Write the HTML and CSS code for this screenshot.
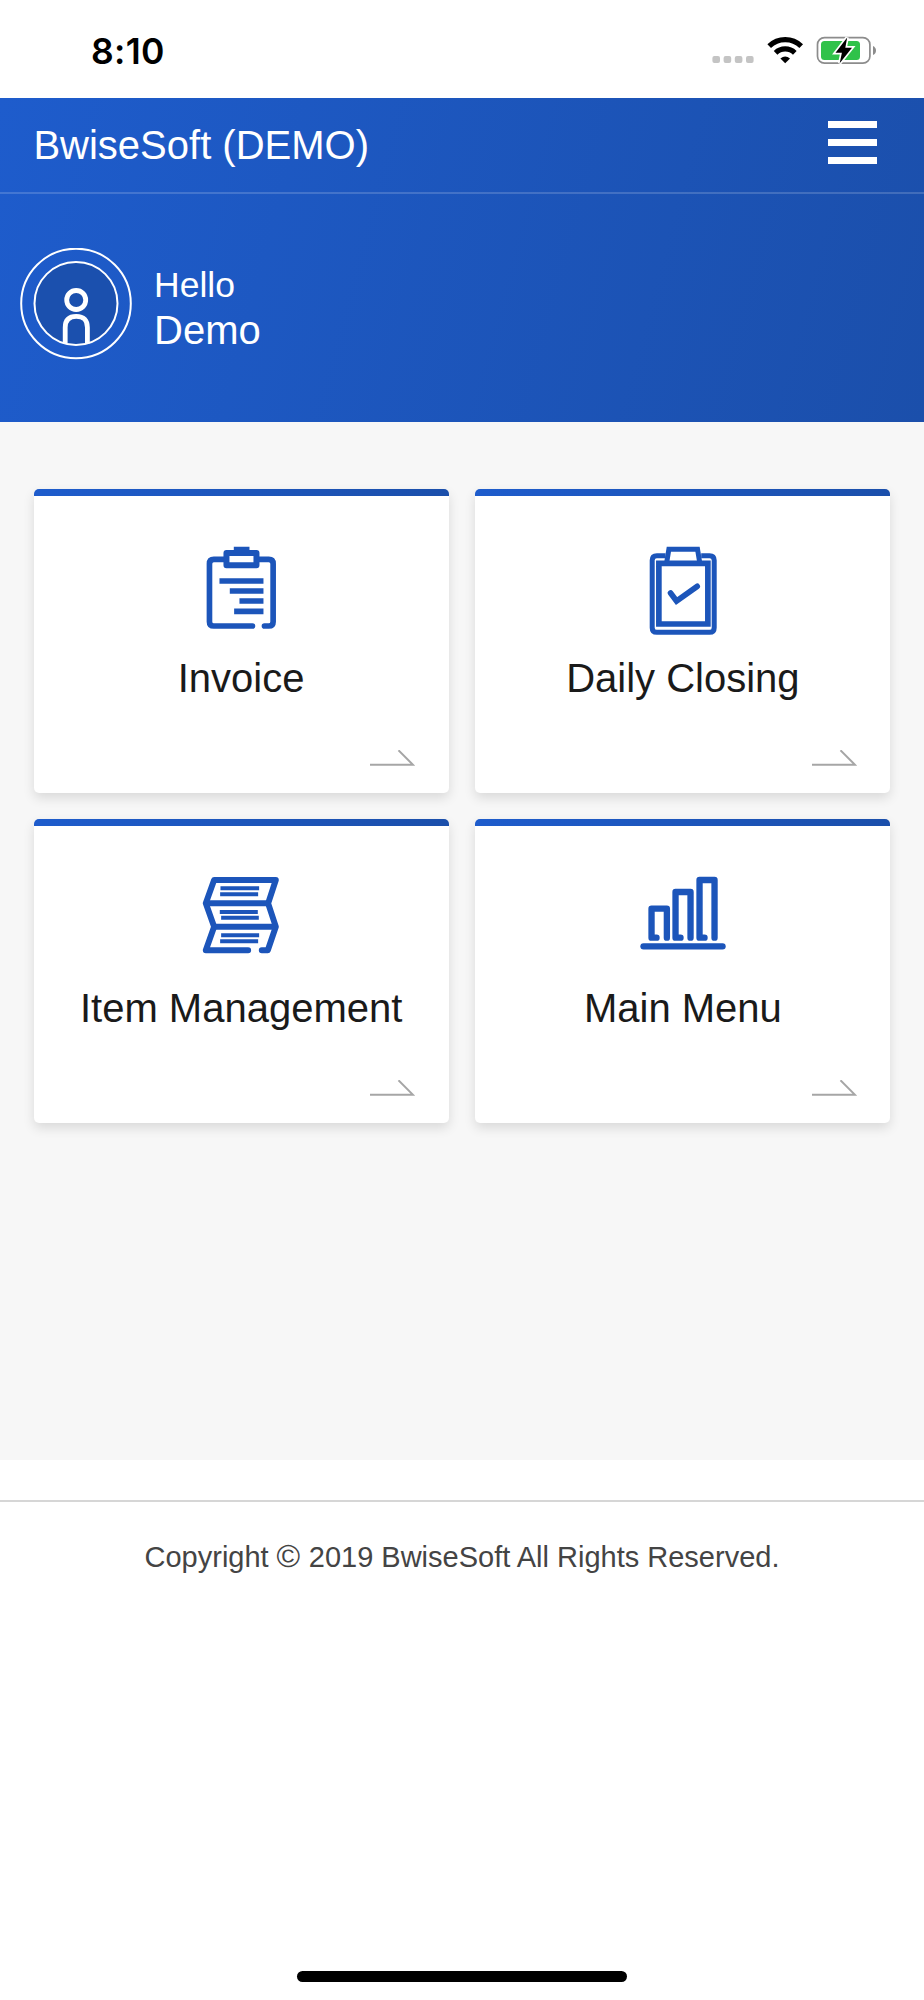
FILE: index.html
```html
<!DOCTYPE html>
<html lang="en">
<head>
    <meta charset="UTF-8">
    <meta name="viewport" content="width=device-width, initial-scale=1.0">
    <title>BwiseSoft (DEMO)</title>
    <link rel="stylesheet" href="styles.css">
</head>
<body>
    <!-- Status bar -->
    <div class="status-bar">
        <span class="time">8:10</span>
        <svg class="status-icons" viewBox="0 0 170 34" width="170" height="34">
            <g fill="#c4c4c4">
                <rect x="2.4" y="23" width="7.6" height="7" rx="2"/>
                <rect x="13.6" y="23" width="7.6" height="7" rx="2"/>
                <rect x="24.8" y="23" width="7.6" height="7" rx="2"/>
                <rect x="36" y="23" width="7.6" height="7" rx="2"/>
            </g>
            <g fill="none" stroke="#000" stroke-width="5.2">
                <path d="M59.2 13.2a23 23 0 0 1 32 0"/>
                <path d="M65.6 19.8a13.8 13.8 0 0 1 19.2 0"/>
            </g>
            <path d="M75.2 30.2l-4.8-4.8q4.8-3.8 9.6 0z" fill="#000"/>
            <rect x="107.5" y="4.6" width="52.4" height="25.6" rx="7" fill="none" stroke="#8c8c8c" stroke-width="1.7"/>
            <path d="M163 13q3 1.500 3 4.500t-3 4.500z" fill="#8c8c8c"/>
            <rect x="111" y="8" width="39" height="19" rx="3.500" fill="#30c24a"/>
            <path d="M137.200 4.500l-11.700 15.300h6.400l-2.200 10.500 12.300-15.500h-6.700z" fill="#000" stroke="#fff" stroke-width="3.400" paint-order="stroke"/>
        </svg>
    </div>

    <!-- Header -->
    <div class="header">
        <div class="navbar">
            <span class="brand">BwiseSoft (DEMO)</span>
            <div class="menu-btn">
                <span></span>
                <span></span>
                <span></span>
            </div>
        </div>
        <div class="profile">
            <svg class="avatar" viewBox="0 0 112 112" width="112" height="112" fill="none" stroke="#fff">
                <circle cx="56" cy="55.500" r="54.800" stroke-width="2"/>
                <circle cx="56" cy="55.500" r="41.500" fill="#1b50ae" stroke-width="2"/>
                <circle cx="56.200" cy="52" r="9.500" stroke-width="4.800"/>
                <path d="M45.200 95.500V79.500q0-11.200 11.100-11.200t11.100 11.200v16" stroke-width="4.800"/>
            </svg>
            <div class="greeting">
                <div class="hello">Hello</div>
                <div class="user">Demo</div>
            </div>
        </div>
    </div>

    <!-- Menu cards -->
    <div class="content">
        <div class="card">
            <svg class="card-icon" viewBox="3.6 0 300 330" fill="none" stroke="#1c55ba" stroke-width="17">
                <path d="M104 73H72q-13 0-13 13v174q0 13 13 13h116M206 73h31q13 0 13 13v174q0 13-13 13h-13" stroke-linecap="round"/>
                <rect x="110" y="54" width="90" height="37" stroke-width="18" stroke-linejoin="round"/>
                <path d="M132 44h47M89 138h132M120 168h101M149 198h72M133 229h88"/>
            </svg>
            <div class="card-title">Invoice</div>
            <svg class="arrow" viewBox="0 0 45 16"><path d="M0 14.800h43L28.500.3" fill="none" stroke="#a6a6a6" stroke-width="2"/></svg>
        </div>
        <div class="card">
            <svg class="card-icon" viewBox="8.4 0 300 330" fill="none" stroke="#1c55ba" stroke-width="15">
                <path d="M106 62H80q-14 0-14 14v202q0 14 14 14h158q14 0 14-14V76q0-14-14-14h-25"/>
                <path d="M86 85h147v182H86z" stroke-width="17"/>
                <path d="M110 79l6-36h86l6 36" stroke-width="15"/>
                <path d="M121 174l18 24 62-44" stroke-width="17" stroke-linecap="round"/>
            </svg>
            <div class="card-title">Daily Closing</div>
            <svg class="arrow" viewBox="0 0 45 16"><path d="M0 14.800h43L28.500.3" fill="none" stroke="#a6a6a6" stroke-width="2"/></svg>
        </div>
        <div class="card">
            <svg class="card-icon" viewBox="3.6 0 300 330" fill="none" stroke="#1c55ba" stroke-width="18" stroke-linejoin="round">
                <path d="M175 256H48l25-71-25-70 25-70h185l-23 70 23 70-24 71h-18" stroke-linecap="round"/>
                <path d="M48 115h187M73 185h185"/>
                <path d="M92 70h116M91 88h114M90 141h114M94 158h113M94 211h114M91 229h114" stroke-width="12"/>
            </svg>
            <div class="card-title">Item Management</div>
            <svg class="arrow" viewBox="0 0 45 16"><path d="M0 14.800h43L28.500.3" fill="none" stroke="#a6a6a6" stroke-width="2"/></svg>
        </div>
        <div class="card">
            <svg class="card-icon" viewBox="8.4 0 300 330" fill="none" stroke="#1c55ba" stroke-width="19" stroke-linecap="round" stroke-linejoin="round">
                <path d="M40 244h237"/>
                <path d="M79 218H64v-87h46v87M151 218h-15V81h45v137M223 218h-15V45h45v173"/>
            </svg>
            <div class="card-title">Main Menu</div>
            <svg class="arrow" viewBox="0 0 45 16"><path d="M0 14.800h43L28.500.3" fill="none" stroke="#a6a6a6" stroke-width="2"/></svg>
        </div>
    </div>

    <!-- Footer -->
    <div class="footer">Copyright <span class="copy">©</span> 2019 BwiseSoft All Rights Reserved.</div>
    <div class="home-bar"></div>
</body>
</html>
```

FILE: styles.css
```css
* { box-sizing: border-box; }
body { margin: 0; height: 2000px; display: flex; flex-direction: column; background-color: #fff; font-family: "Liberation Sans", Arial, sans-serif; }
svg { display: block; flex: none; }

.status-bar { height: 98px; padding: 33px 44px 0 91px; display: flex; justify-content: space-between; }
.time { padding-top: 1px; font-family: Inter, sans-serif; font-size: 35.5px; font-weight: 600; line-height: 35px; letter-spacing: 0.3px; }

.header { height: 324px; background: linear-gradient(105deg, #1e5ccc, #1b4fab); color: #fff; }
.navbar { height: 96px; padding: 0 47px 0 33.4px; display: flex; align-items: center; justify-content: space-between; border-bottom: 2px solid rgba(255, 255, 255, 0.17); }
.brand { font-size: 40px; line-height: 46px; }
.menu-btn { width: 49px; display: flex; flex-direction: column; gap: 11px; margin-bottom: 6px; }
.menu-btn span { height: 7px; background-color: #fff; }
.profile { display: flex; padding: 54px 0 0 20px; }
.greeting { padding: 15px 0 0 22px; }
.hello { font-size: 35.5px; line-height: 44px; }
.user { font-size: 40px; line-height: 47px; }

.content { height: 1038px; padding: 67px 33.6px 0; background-color: #f7f7f7; display: grid; grid-template-columns: 1fr 1fr; grid-auto-rows: 303.6px; gap: 26.7px; }
.card { display: flex; flex-direction: column; align-items: center; padding: 46px 33.4px 0; border-radius: 5px; background: linear-gradient(100deg, #1e5ccc, #1b4fab) top / 100% 7px no-repeat, #fff; box-shadow: 0 5px 12px rgba(0, 0, 0, 0.12); }
.card-icon { width: 100px; height: 110px; }
.card-title { margin-top: 9px; font-size: 40px; line-height: 48px; color: #1a1a1a; white-space: nowrap; }
.arrow { width: 45px; height: 16px; margin-top: 48px; align-self: flex-end; }

.footer { margin-top: 40px; padding-top: 38px; border-top: 2px solid #d6d6d6; text-align: center; font-size: 29px; line-height: 34px; color: #444; }
.copy { display: inline-block; width: 24px; font-size: 32px; line-height: 30px; text-indent: -1px; }
.home-bar { width: 330px; height: 11px; margin: auto auto 18px; border-radius: 6px; background-color: #000; }
```
